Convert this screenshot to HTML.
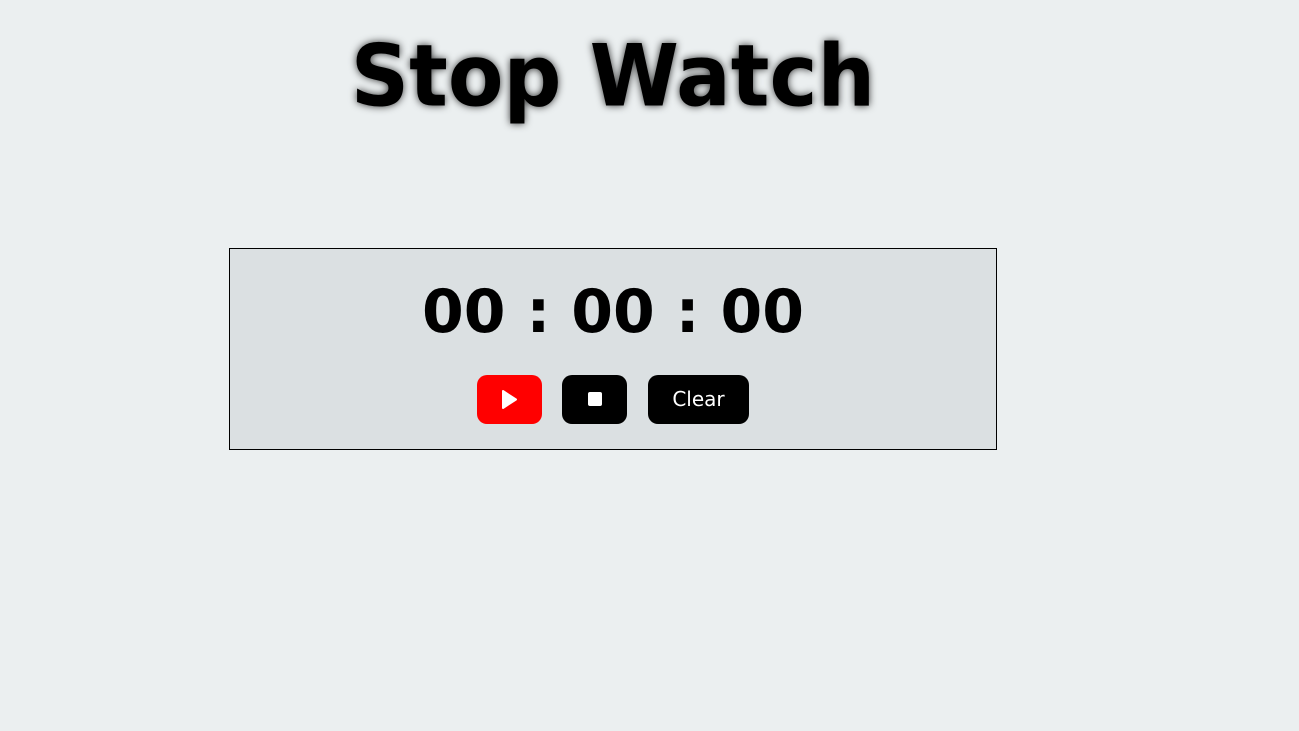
<!DOCTYPE html>
<html><head><style>
html,body{margin:0;background:#ebeff0;width:1299px;height:731px;overflow:hidden;font-family:"DejaVu Sans",sans-serif;}
h1{position:absolute;left:229px;width:768px;top:37px;margin:0;text-align:center;font-size:81px;font-weight:bold;line-height:1;transform:scaleY(1.06);text-shadow:0 0 8px rgba(0,0,0,.8);}
.box{position:absolute;left:229px;top:248px;width:766px;height:200px;border:1px solid #000;background:#dbe0e2;}
.t{position:absolute;top:277px;left:229px;width:768px;text-align:center;font-weight:bold;font-size:60px;line-height:70px;}
.b{position:absolute;top:375px;height:49px;border-radius:10px;background:#000;color:#fff;font-size:20px;}
</style></head><body>
<h1>Stop Watch</h1>
<div class="box"></div>
<div class="t">00 : 00 : 00</div>
<div class="b" style="left:477px;width:65px;background:#f00"><svg width="65" height="49" style="display:block"><path d="M26 16 L39 24.5 L26 33 Z" fill="#fff" stroke="#fff" stroke-width="2" stroke-linejoin="round"/></svg></div>
<div class="b" style="left:562px;width:65px"><div style="position:absolute;left:26px;top:17px;width:14px;height:14px;background:#fff;border-radius:2px"></div></div>
<div class="b" style="left:648px;width:101px;text-align:center;line-height:49px">Clear</div>
</body></html>
